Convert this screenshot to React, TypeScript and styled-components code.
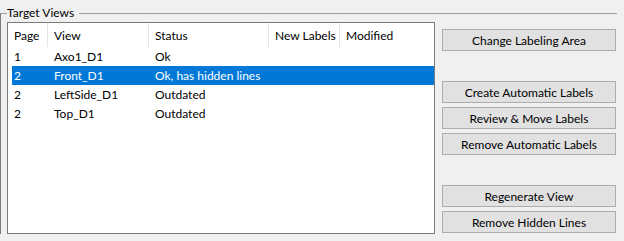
import * as React from "react";
import styled, { createGlobalStyle } from "styled-components";

const GlobalStyle = createGlobalStyle`
  html, body {
    margin: 0;
    padding: 0;
    background: #f0f0f0;
  }
  body {
    width: 624px;
    height: 241px;
    overflow: hidden;
    font-family: "Segoe UI", Lato, "Liberation Sans", sans-serif;
    font-size: 12px;
    color: #000;
  }
`;

const Group = styled.fieldset`
  box-sizing: border-box;
  width: 617px;
  margin: 5px 0 0 0;
  padding: 1px 1px 0 6px;
  border: none;
  border-top: 1px solid #a0a0a0;
  border-left: 1px solid #7a7a7a;
  min-width: 0;
`;

const Legend = styled.legend`
  padding: 0 5px 0 0;
  line-height: 16px;
  font-size: 12px;
`;

const Body = styled.div`
  display: flex;
  gap: 7px;
`;

const ListBox = styled.div`
  box-sizing: border-box;
  width: 428px;
  height: 212px;
  border: 1px solid #7a7a7a;
  background: #fff;
  overflow: hidden;
`;

const columns = "40px 101px 120px 71px 1fr";

const HeaderRow = styled.div`
  display: grid;
  grid-template-columns: ${columns};
  height: 24px;
`;

const HeaderCell = styled.div<{ $last?: boolean }>`
  display: flex;
  align-items: center;
  padding-left: 6px;
  border-right: ${(p) => (p.$last ? "none" : "1px solid #e5e5e5")};
  white-space: nowrap;
`;

const Row = styled.div<{ $selected?: boolean }>`
  display: grid;
  grid-template-columns: 36px 101px 120px 71px 1fr;
  height: 19px;
  margin-left: 4px;
  background: ${(p) => (p.$selected ? "#0078d7" : "transparent")};
  color: ${(p) => (p.$selected ? "#fff" : "#000")};
`;

const Cell = styled.div<{ $first?: boolean }>`
  display: flex;
  align-items: center;
  padding-left: ${(p) => (p.$first ? "2px" : "6px")};
  white-space: nowrap;
`;

const ButtonColumn = styled.div`
  display: flex;
  flex-direction: column;
  gap: 30px;
  padding-top: 7px;
`;

const ButtonGroup = styled.div`
  display: flex;
  flex-direction: column;
  gap: 4px;
`;

const Button = styled.button`
  box-sizing: border-box;
  width: 174px;
  height: 22px;
  padding: 0;
  background: #e1e1e1;
  border: 1px solid #adadad;
  border-radius: 0;
  font-family: inherit;
  font-size: 12px;
  color: #000;
`;

const headers = ["Page", "View", "Status", "New Labels", "Modified"];

const rows = [
  { page: "1", view: "Axo1_D1", status: "Ok" },
  { page: "2", view: "Front_D1", status: "Ok, has hidden lines", selected: true },
  { page: "2", view: "LeftSide_D1", status: "Outdated" },
  { page: "2", view: "Top_D1", status: "Outdated" },
];

const buttonGroups = [
  ["Change Labeling Area"],
  ["Create Automatic Labels", "Review & Move Labels", "Remove Automatic Labels"],
  ["Regenerate View", "Remove Hidden Lines"],
];

export default function App(): JSX.Element {
  return (
    <>
      <GlobalStyle />
      <Group>
        <Legend>Target Views</Legend>
        <Body>
          <ListBox>
            <HeaderRow>
              {headers.map((h, i) => (
                <HeaderCell key={h} $last={i === headers.length - 1}>
                  {h}
                </HeaderCell>
              ))}
            </HeaderRow>
            {rows.map((r) => (
              <Row key={r.view} $selected={r.selected}>
                <Cell $first>{r.page}</Cell>
                <Cell>{r.view}</Cell>
                <Cell>{r.status}</Cell>
                <Cell />
                <Cell />
              </Row>
            ))}
          </ListBox>
          <ButtonColumn>
            {buttonGroups.map((g, i) => (
              <ButtonGroup key={i}>
                {g.map((b) => (
                  <Button key={b}>{b}</Button>
                ))}
              </ButtonGroup>
            ))}
          </ButtonColumn>
        </Body>
      </Group>
    </>
  );
}
